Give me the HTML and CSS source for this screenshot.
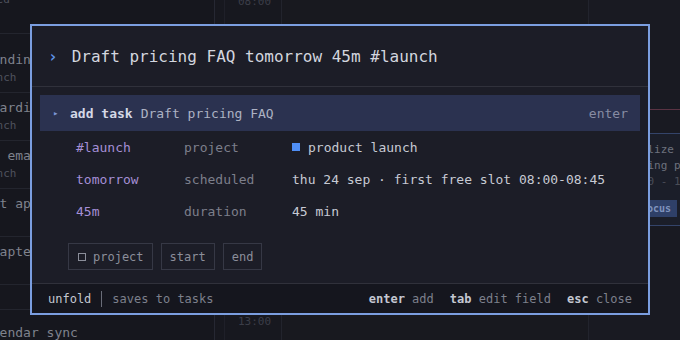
FILE: index.html
```html
<!DOCTYPE html>
<html lang="en">
<head>
<meta charset="utf-8">
<title>Quick add</title>
<link rel="stylesheet" href="styles.css">
</head>
<body>
<div class="app">
  <aside class="list">
    <div class="item item-top"><div class="sub">tue · moved</div></div>
    <div class="item item-first"><div class="title">Draft landing page</div><div class="sub">fri · launch</div></div>
    <div class="item"><div class="title">Fix onboarding flow</div><div class="sub">mon · launch</div></div>
    <div class="item"><div class="title">Schedule email blast</div><div class="sub">wed · launch</div></div>
    <div class="item"><div class="title">Beta test app build</div><div class="sub">ops</div></div>
    <div class="item"><div class="title">Write chapter 3</div><div class="sub">book</div></div>
    <div class="item item-group"></div>
    <div class="item item-last"><div class="title">Test calendar sync</div></div>
  </aside>
  <div class="rail"></div>
  <div class="gutter">
    <span class="hour">08:00</span>
    <span class="hour">09:00</span>
    <span class="hour">10:00</span>
    <span class="hour">11:00</span>
    <span class="hour">12:00</span>
    <span class="hour">13:00</span>
  </div>
  <div class="day"></div>
  <div class="day day-b">
    <div class="now-line"></div>
    <div class="event">
      <div class="ev-line ev-title">Finalize</div>
      <div class="ev-line ev-title">pricing page</div>
      <div class="ev-line ev-time">10:00 - 11:30</div>
      <span class="ev-badge">focus</span>
    </div>
  </div>
</div>

<div class="modal">
  <div class="cmd">
    <span class="prompt">›</span>
    <span class="cmd-text">Draft pricing FAQ tomorrow 45m #launch</span>
  </div>
  <div class="body">
    <div class="suggest">
      <span class="caret">▸</span>
      <span class="verb">add task</span>
      <span class="subject">Draft pricing FAQ</span>
      <span class="hint">enter</span>
    </div>
    <div class="field">
      <span class="token">#launch</span>
      <span class="label">project</span>
      <span class="value"><span class="swatch"></span>product launch</span>
    </div>
    <div class="field">
      <span class="token">tomorrow</span>
      <span class="label">scheduled</span>
      <span class="value">thu 24 sep · first free slot 08:00-08:45</span>
    </div>
    <div class="field">
      <span class="token">45m</span>
      <span class="label">duration</span>
      <span class="value">45 min</span>
    </div>
    <div class="buttons">
      <span class="btn"><span class="box"></span>project</span>
      <span class="btn">start</span>
      <span class="btn">end</span>
    </div>
  </div>
  <div class="foot">
    <span class="foot-key">unfold</span>
    <span class="divider"></span>
    <span class="foot-label">saves to tasks</span>
    <div class="foot-right">
      <span><b class="k">enter</b> <span class="foot-label">add</span></span>
      <span><b class="k">tab</b> <span class="foot-label">edit field</span></span>
      <span><b class="k">esc</b> <span class="foot-label">close</span></span>
    </div>
  </div>
</div>
</body>
</html>
```

FILE: styles.css
```css
* { box-sizing: border-box; }

html, body {
  margin: 0;
  padding: 0;
  width: 680px;
  height: 340px;
  overflow: hidden;
  background: #16171e;
  font-family: "DejaVu Sans Mono", "Liberation Mono", monospace;
}

/* ---------- background app ---------- */
.app {
  display: flex;
  height: 340px;
  margin-left: -75px;
}

.list {
  width: 290px;
  flex: none;
  background: #16171e;
  border-right: 1px solid #262833;
  white-space: nowrap;
  overflow: hidden;
}

.item {
  padding: 6px 12px 5px;
  border-bottom: 1px solid #23252e;
}
.item-top { margin-top: -9px; padding-top: 0; padding-bottom: 24px; }
.item-first { padding-top: 17px; }
.item-group { height: 25px; padding: 0; }
.item-last { padding-top: 14px; border-bottom: none; }

.title {
  font-size: 13px;
  line-height: 18px;
  color: #7f828d;
}
.sub {
  font-size: 11px;
  line-height: 18px;
  color: #4f525d;
}

.rail {
  width: 10px;
  flex: none;
  border-right: 1px solid #1f2029;
  background: #17181f;
}

.gutter {
  width: 57px;
  flex: none;
  display: flex;
  flex-direction: column;
  margin-top: -5px;
  padding-left: 13px;
  border-right: 1px solid #22242d;
  background: #17181f;
}
.hour {
  height: 64px;
  flex: none;
  font-size: 11px;
  line-height: 14px;
  color: #3b3d48;
}

.day {
  width: 307px;
  flex: none;
  border-right: 1px solid #22242d;
  background: #18191f;
}
.day-b {
  flex: 1;
  width: auto;
  position: relative;
  border-right: none;
  background: #191a22;
}

.now-line {
  position: absolute;
  left: 0;
  right: 0;
  top: 109px;
  height: 1px;
  background: #5a3343;
}

.event {
  position: absolute;
  top: 133px;
  left: 24px;
  width: 130px;
  height: 93px;
  padding: 8px 8px 0;
  background: #1b1e29;
  border-top: 1px solid #34446a;
  border-bottom: 1px solid #34446a;
  white-space: nowrap;
}
.ev-line {
  font-size: 11px;
  line-height: 16px;
}
.ev-title { color: #6d717d; }
.ev-time { color: #4a4d58; }
.ev-badge {
  display: inline-block;
  margin-top: 10px;
  margin-left: 14px;
  height: 17px;
  padding: 0 6px;
  font-size: 10px;
  line-height: 17px;
  font-weight: bold;
  color: #7f93bd;
  background: #2f4068;
}

/* ---------- modal ---------- */
.modal {
  position: absolute;
  left: 30px;
  top: 24px;
  width: 620px;
  height: 291px;
  border: 2px solid #7b9ee0;
  background: #1c1d27;
  display: flex;
  flex-direction: column;
}

.cmd {
  height: 61px;
  flex: none;
  display: flex;
  align-items: center;
  padding-left: 16px;
  border-bottom: 1px solid #30313b;
  font-size: 16px;
}
.prompt {
  color: #5e93e6;
  font-weight: bold;
  margin-right: 14px;
}
.cmd-text {
  color: #d3d6df;
}

.body {
  padding: 8px 8px 0;
  font-size: 13px;
}

.suggest {
  height: 36px;
  display: flex;
  align-items: center;
  padding: 0 12px 0 13px;
  background: #2b3250;
  white-space: nowrap;
}
.caret {
  font-size: 9px;
  color: #7d97d6;
  width: 17px;
}
.verb {
  font-weight: bold;
  color: #d4d8e6;
  margin-right: 8px;
}
.subject {
  color: #adb2c4;
}
.hint {
  margin-left: auto;
  color: #878ca3;
}

.field {
  height: 32px;
  display: grid;
  grid-template-columns: 108px 108px 1fr;
  align-items: center;
  padding-left: 36px;
  white-space: nowrap;
}
.token { color: #a58fd6; }
.label { color: #7c7f8b; }
.value {
  color: #c7cad4;
  display: flex;
  align-items: center;
}
.swatch {
  width: 8px;
  height: 8px;
  background: #4f8ef5;
  margin-right: 8px;
}

.buttons {
  display: flex;
  gap: 8px;
  margin-top: 16px;
  padding-left: 28px;
}
.btn {
  height: 27px;
  display: flex;
  align-items: center;
  padding: 0 8px;
  border: 1px solid #363845;
  font-size: 12px;
  color: #8b8e9a;
}
.box {
  width: 8px;
  height: 8px;
  border: 1px solid #8b8e9a;
  margin: 0 7px 0 1px;
}

.foot {
  margin-top: auto;
  height: 30px;
  flex: none;
  display: flex;
  align-items: center;
  padding: 0 16px;
  border-top: 1px solid #30313b;
  background: #15161e;
  font-size: 12px;
  white-space: nowrap;
}
.foot-key { color: #c4c7d1; }
.foot-label { color: #7d808c; }
.divider {
  width: 1px;
  height: 16px;
  background: #6a6d79;
  margin: 0 10px 0 10px;
}
.foot-right {
  margin-left: auto;
  display: flex;
  gap: 16px;
}
.k {
  font-weight: bold;
  color: #c4c7d1;
}
```
